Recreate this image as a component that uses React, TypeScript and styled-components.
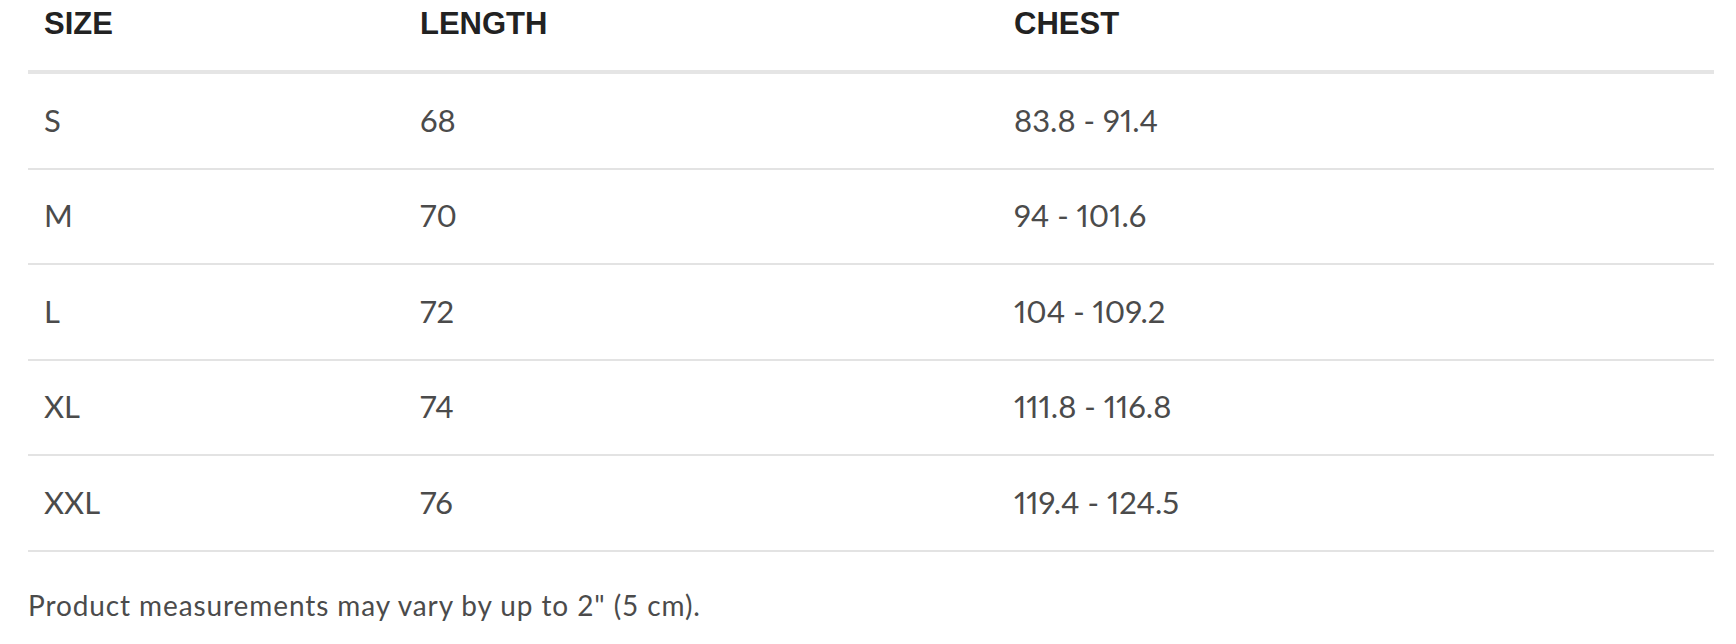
import styled, { createGlobalStyle } from "styled-components";

const GlobalStyle = createGlobalStyle`
  body {
    margin: 0;
    background: #ffffff;
  }
`;

const rows = [
  { size: "S", length: "68", chest: "83.8 - 91.4" },
  { size: "M", length: "70", chest: "94 - 101.6" },
  { size: "L", length: "72", chest: "104 - 109.2" },
  { size: "XL", length: "74", chest: "111.8 - 116.8" },
  { size: "XXL", length: "76", chest: "119.4 - 124.5" },
];

const columns = [
  { label: "SIZE", width: "376px" },
  { label: "LENGTH", width: "594px" },
  { label: "CHEST", width: "auto" },
];

const SizeChart = () => {
  return (
    <Wrapper>
      <Table>
        <colgroup>
          {columns.map((col) => (
            <Col key={col.label} $width={col.width} />
          ))}
        </colgroup>
        <thead>
          <tr>
            {columns.map((col) => (
              <HeadCell key={col.label}>{col.label}</HeadCell>
            ))}
          </tr>
        </thead>
        <tbody>
          {rows.map((row) => (
            <Row key={row.size}>
              <Cell>{row.size}</Cell>
              <Cell>{row.length}</Cell>
              <Cell>{row.chest}</Cell>
            </Row>
          ))}
        </tbody>
      </Table>
      <Note>Product measurements may vary by up to 2" (5 cm).</Note>
    </Wrapper>
  );
};

const Wrapper = styled.div`
  padding: 0 22px 0 28px;
`;

const Table = styled.table`
  width: 100%;
  border-collapse: collapse;
  table-layout: fixed;
`;

const Col = styled.col<{ $width: string }>`
  width: ${(p) => p.$width};
`;

const HeadCell = styled.th`
  padding: 6px 16px 28px;
  text-align: left;
  font-family: "Liberation Sans", Arial, sans-serif;
  font-size: 31px;
  font-weight: 700;
  line-height: 36px;
  color: #222222;
  border-bottom: 4px solid #e5e5e5;
`;

const Row = styled.tr`
  border-bottom: 2px solid #e3e3e3;
`;

const Cell = styled.td`
  padding: 29.7px 16px 31.9px;
  font-family: Lato, "Open Sans", sans-serif;
  font-size: 31px;
  line-height: 32px;
  color: #4b4b4b;
  font-variant-numeric: proportional-nums;
`;

const Note = styled.p`
  margin: 36.7px 0 0;
  font-family: Lato, "Open Sans", sans-serif;
  font-size: 28px;
  line-height: 33.6px;
  letter-spacing: 0.9px;
  color: #4b4b4b;
`;

export default function App() {
  return (
    <>
      <GlobalStyle />
      <SizeChart />
    </>
  );
}
